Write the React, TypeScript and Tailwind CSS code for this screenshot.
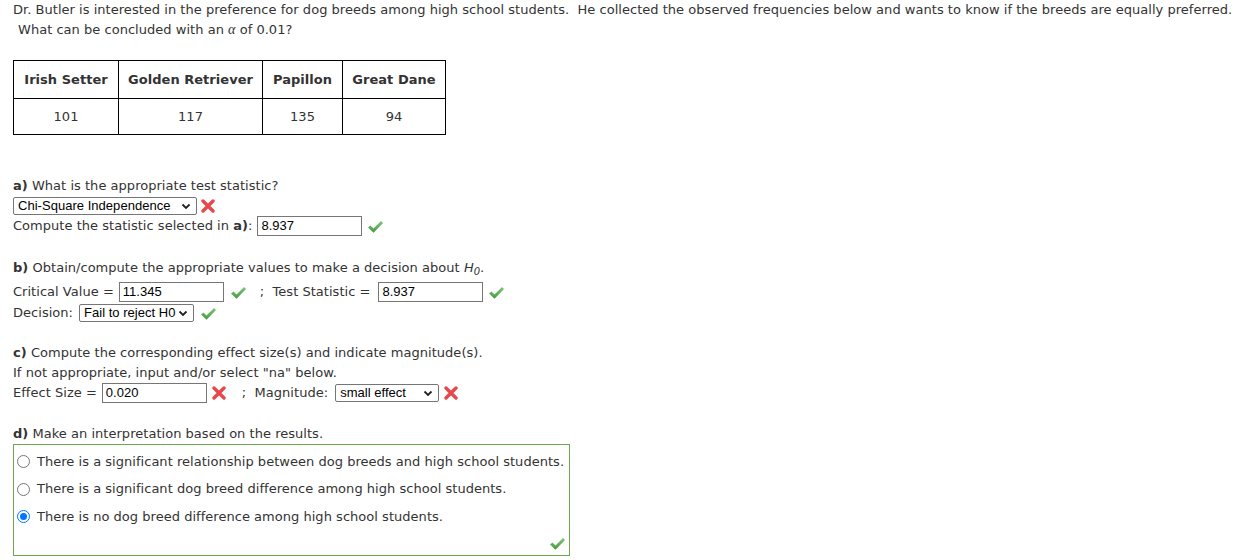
import React from "react";

const Check = () => (
  <svg width="17" height="14" viewBox="0 0 17 14" className="shrink-0">
    <defs>
      <linearGradient id="gck" x1="0" y1="0" x2="0" y2="1">
        <stop offset="0" stopColor="#7fc77a" />
        <stop offset="1" stopColor="#3f9a3a" />
      </linearGradient>
    </defs>
    <path d="M1 7.5 L3.5 5.5 L6.5 8.5 L14 1 L16 3 L6.5 12.8 Z" fill="url(#gck)" />
  </svg>
);

const Cross = () => (
  <svg width="14" height="14" viewBox="0 0 14 14" className="shrink-0">
    <path
      d="M2 2 L12 12 M12 2 L2 12"
      stroke="#e8474a"
      strokeWidth="3.4"
      strokeLinecap="round"
    />
  </svg>
);

const Chevron = () => (
  <svg width="10" height="7" viewBox="0 0 10 7" className="shrink-0">
    <path d="M1.5 1.5 L5 5 L8.5 1.5" stroke="#222" strokeWidth="1.8" fill="none" />
  </svg>
);

function Select({ value, w }: { value: string; w: string }) {
  return (
    <span
      className={`${w} h-[18px] flex items-center justify-between border border-[#767676] rounded-[2px] bg-white pl-[4px] pr-[5px] text-[13px] text-black font-['Liberation_Sans',Arial,sans-serif]`}
    >
      <span>{value}</span>
      <Chevron />
    </span>
  );
}

function Field({ value }: { value: string }) {
  return (
    <span className="w-[105px] h-[20px] flex items-center border border-[#767676] bg-white pl-[3px] text-[13px] text-black font-['Liberation_Sans',Arial,sans-serif]">
      {value}
    </span>
  );
}

function Radio({ checked, label }: { checked?: boolean; label: string }) {
  return (
    <div className="flex items-center h-[27.5px]">
      <span
        className={`w-[13px] h-[13px] rounded-full border flex items-center justify-center ${
          checked ? "border-[#0075ff]" : "border-[#767676]"
        }`}
      >
        {checked && <span className="w-[7px] h-[7px] rounded-full bg-[#0075ff]" />}
      </span>
      <span className="ml-[7px]">{label}</span>
    </div>
  );
}

export default function App() {
  return (
    <div className="w-[1260px] h-[560px] bg-white pl-[13px] text-[13px] leading-[20px] text-[#333] tracking-[0.03px] font-['DejaVu_Sans',Verdana,sans-serif] overflow-hidden">
      <div>
        Dr. Butler is interested in the preference for dog breeds among high school students.&nbsp; He
        collected the observed frequencies below and wants to know if the breeds are equally preferred.
      </div>
      <div className="pl-[5px]">
        What can be concluded with an <i className="font-['Liberation_Serif',serif] text-[14px]">α</i> of 0.01?
      </div>

      <table className="mt-[20px] border-collapse text-center">
        <tbody>
          <tr className="h-[38px] font-bold">
            <td className="border border-black w-[105px]">Irish Setter</td>
            <td className="border border-black w-[144px]">Golden Retriever</td>
            <td className="border border-black w-[80px]">Papillon</td>
            <td className="border border-black w-[103px]">Great Dane</td>
          </tr>
          <tr className="h-[36px]">
            <td className="border border-black">101</td>
            <td className="border border-black">117</td>
            <td className="border border-black">135</td>
            <td className="border border-black">94</td>
          </tr>
        </tbody>
      </table>

      <div className="mt-[41px]">
        <b>a)</b> What is the appropriate test statistic?
      </div>
      <div className="flex items-center h-[20px] gap-[4px]">
        <Select value="Chi-Square Independence" w="w-[184px]" />
        <Cross />
      </div>
      <div className="flex items-center h-[20px]">
        <span>
          Compute the statistic selected in <b>a)</b>:
        </span>
        <span className="ml-[5px]">
          <Field value="8.937" />
        </span>
        <span className="ml-[5px] mt-[2px]">
          <Check />
        </span>
      </div>

      <div className="mt-[22px]">
        <b>b)</b> Obtain/compute the appropriate values to make a decision about{" "}
        <i>
          H<sub className="text-[10px]">0</sub>
        </i>
        .
      </div>
      <div className="flex items-center h-[20px] mt-[4px]">
        <span>Critical Value =</span>
        <span className="ml-[5px]">
          <Field value="11.345" />
        </span>
        <span className="ml-[6px] mt-[2px]">
          <Check />
        </span>
        <span className="ml-[13px]">;&nbsp; Test Statistic =</span>
        <span className="ml-[8px]">
          <Field value="8.937" />
        </span>
        <span className="ml-[5px] mt-[2px]">
          <Check />
        </span>
      </div>
      <div className="flex items-center h-[20px] mt-[1px]">
        <span>Decision:</span>
        <span className="ml-[6px]">
          <Select value="Fail to reject H0" w="w-[115px]" />
        </span>
        <span className="ml-[6px] mt-[2px]">
          <Check />
        </span>
      </div>

      <div className="mt-[20px]">
        <b>c)</b> Compute the corresponding effect size(s) and indicate magnitude(s).
      </div>
      <div>If not appropriate, input and/or select "na" below.</div>
      <div className="flex items-center h-[20px]">
        <span>Effect Size =</span>
        <span className="ml-[5px]">
          <Field value="0.020" />
        </span>
        <span className="ml-[5px]">
          <Cross />
        </span>
        <span className="ml-[16px]">;&nbsp; Magnitude:</span>
        <span className="ml-[7px]">
          <Select value="small effect" w="w-[104px]" />
        </span>
        <span className="ml-[5px]">
          <Cross />
        </span>
      </div>

      <div className="mt-[21px]">
        <b>d)</b> Make an interpretation based on the results.
      </div>
      <div className="w-[557px] h-[112px] border border-[#6aa84f] flex flex-col pl-[3px] pt-[3px]">
        <Radio label="There is a significant relationship between dog breeds and high school students." />
        <Radio label="There is a significant dog breed difference among high school students." />
        <Radio checked label="There is no dog breed difference among high school students." />
        <div className="flex justify-end pr-[3px] mt-auto mb-[4px]">
          <Check />
        </div>
      </div>
    </div>
  );
}
